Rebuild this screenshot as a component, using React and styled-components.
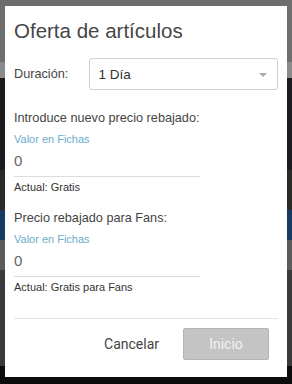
import React from 'react';
import styled, { createGlobalStyle } from 'styled-components';

const GlobalStyle = createGlobalStyle`
  html, body {
    margin: 0;
    padding: 0;
    width: 292px;
    height: 384px;
    overflow: hidden;
    font-family: "Liberation Sans", Arial, sans-serif;
  }
`;

const Page = styled.div`
  position: relative;
  width: 292px;
  height: 384px;
  overflow: hidden;
  display: flex;
  flex-direction: column;
  background: #1a1a1a;
`;

const Band = styled.div`
  height: ${({ h }) => h}px;
  background: ${({ bg }) => bg};
  flex-shrink: 0;
`;

const Modal = styled.div`
  position: absolute;
  top: 6px;
  left: 5px;
  width: 282px;
  height: 371px;
  background: #fff;
  box-sizing: border-box;
  padding: 13px 9px 0 9px;
  display: flex;
  flex-direction: column;
  color: #444;
`;

const Title = styled.h1`
  margin: 0;
  font-size: 20.5px;
  font-weight: 400;
  line-height: 24px;
  color: #464646;
`;

const DurationRow = styled.div`
  display: flex;
  align-items: center;
  margin-top: 15px;
`;

const Label = styled.span`
  width: 76px;
  font-size: 12.7px;
  color: #444;
`;

const Select = styled.div`
  position: relative;
  width: 193px;
  height: 32px;
  box-sizing: border-box;
  border: 1px solid #cfcfcf;
  border-radius: 3px;
  display: flex;
  align-items: center;
  padding-left: 9px;
  font-size: 13.5px;
  color: #333;
`;

const Caret = styled.span`
  position: absolute;
  right: 10px;
  top: 14px;
  width: 0;
  height: 0;
  border-left: 4px solid transparent;
  border-right: 4px solid transparent;
  border-top: 4px solid #a8a8a8;
`;

const Field = styled.div`
  display: flex;
  flex-direction: column;
  margin-top: ${({ mt }) => mt}px;
`;

const FieldTitle = styled.div`
  font-size: 12.7px;
  line-height: 16px;
  color: #444;
`;

const Hint = styled.div`
  margin-top: 6px;
  font-size: 11px;
  line-height: 14px;
  color: #6aaccb;
`;

const Value = styled.div`
  width: 186px;
  margin-top: 6px;
  padding-bottom: 6px;
  border-bottom: 1px solid #dcdcdc;
  font-size: 15px;
  line-height: 18px;
  color: #666;
`;

const Current = styled.div`
  margin-top: 3px;
  font-size: 11px;
  line-height: 14px;
  color: #333;
`;

const Footer = styled.div`
  margin-top: 24px;
  border-top: 1px solid #e6e6e6;
  display: flex;
  justify-content: flex-end;
  align-items: center;
  gap: 24px;
  padding: 9px 9px 0 0;
`;

const TextButton = styled.button`
  background: none;
  border: none;
  padding: 0;
  font-family: Roboto, "Liberation Sans", sans-serif;
  font-size: 14px;
  color: #444;
  cursor: pointer;
`;

const PrimaryButton = styled.button`
  width: 86px;
  height: 32px;
  box-sizing: border-box;
  background: #c4c4c4;
  border: 1px solid #b4b4b4;
  border-radius: 2px;
  font-family: Roboto, "Liberation Sans", sans-serif;
  font-size: 14px;
  color: #f2f2f2;
`;

export default function App() {
  return (
    <>
      <GlobalStyle />
      <Page>
        <Band h={62} bg="#6e6e6e" />
        <Band h={16} bg="#8a8a8a" />
        <Band h={92} bg="#1c1c1e" />
        <Band h={40} bg="#2a2a28" />
        <Band h={30} bg="#173a63" />
        <Band h={30} bg="#5c5c5c" />
        <Band h={96} bg="#3a3a3a" />
        <Band h={18} bg="#0c0c0c" />
        <Modal>
          <Title>Oferta de artículos</Title>
          <DurationRow>
            <Label>Duración:</Label>
            <Select>
              1 Día
              <Caret />
            </Select>
          </DurationRow>
          <Field mt={20}>
            <FieldTitle>Introduce nuevo precio rebajado:</FieldTitle>
            <Hint>Valor en Fichas</Hint>
            <Value>0</Value>
            <Current>Actual: Gratis</Current>
          </Field>
          <Field mt={16}>
            <FieldTitle>Precio rebajado para Fans:</FieldTitle>
            <Hint>Valor en Fichas</Hint>
            <Value>0</Value>
            <Current>Actual: Gratis para Fans</Current>
          </Field>
          <Footer>
            <TextButton>Cancelar</TextButton>
            <PrimaryButton>Inicio</PrimaryButton>
          </Footer>
        </Modal>
      </Page>
    </>
  );
}
